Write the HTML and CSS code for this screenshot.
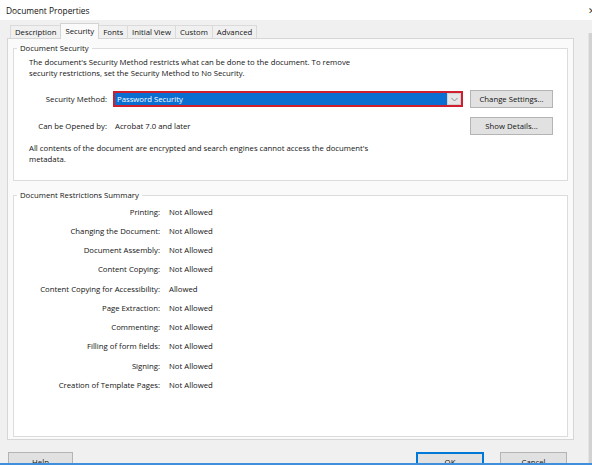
FILE: index.html
```html
<!DOCTYPE html>
<html lang="en">
<head>
<meta charset="utf-8">
<title>Document Properties</title>
<link rel="stylesheet" href="styles.css">
</head>
<body>
<div class="window">
  <header class="titlebar">
    <span class="title">Document Properties</span>
    <span class="close">&#x2715;</span>
  </header>
  <div class="content">
    <div class="dialog">
      <nav class="tabs">
        <span class="tab">Description</span>
        <span class="tab tab-active">Security</span>
        <span class="tab">Fonts</span>
        <span class="tab">Initial View</span>
        <span class="tab">Custom</span>
        <span class="tab">Advanced</span>
      </nav>
      <section class="panel">
        <fieldset class="group group-security">
          <legend>Document Security</legend>
          <p class="para para-intro">The document's Security Method restricts what can be done to the document. To remove security restrictions, set the Security Method to No Security.</p>
          <div class="method-grid">
            <span class="label">Security Method:</span>
            <div class="select">
              <span class="select-text">Password Security</span>
              <span class="select-arrow">
                <svg width="7" height="5" viewBox="0 0 7 5"><path d="M0.5 1 L3.5 4 L6.5 1" fill="none" stroke="#8a8a8a" stroke-width="1"/></svg>
              </span>
            </div>
            <button class="btn btn-side">Change Settings...</button>
            <span class="label">Can be Opened by:</span>
            <span class="value">Acrobat 7.0 and later</span>
            <button class="btn btn-side">Show Details...</button>
          </div>
          <p class="para para-note">All contents of the document are encrypted and search engines cannot access the document's metadata.</p>
        </fieldset>
        <fieldset class="group group-restrictions">
          <legend>Document Restrictions Summary</legend>
          <div class="restrictions">
            <span class="r-label">Printing:</span><span class="r-value">Not Allowed</span>
            <span class="r-label">Changing the Document:</span><span class="r-value">Not Allowed</span>
            <span class="r-label">Document Assembly:</span><span class="r-value">Not Allowed</span>
            <span class="r-label">Content Copying:</span><span class="r-value">Not Allowed</span>
            <span class="r-label">Content Copying for Accessibility:</span><span class="r-value">Allowed</span>
            <span class="r-label">Page Extraction:</span><span class="r-value">Not Allowed</span>
            <span class="r-label">Commenting:</span><span class="r-value">Not Allowed</span>
            <span class="r-label">Filling of form fields:</span><span class="r-value">Not Allowed</span>
            <span class="r-label">Signing:</span><span class="r-value">Not Allowed</span>
            <span class="r-label">Creation of Template Pages:</span><span class="r-value">Not Allowed</span>
          </div>
        </fieldset>
      </section>
      <footer class="actions">
        <button class="btn btn-help">Help</button>
        <span class="spacer"></span>
        <button class="btn btn-ok">OK</button>
        <button class="btn btn-cancel">Cancel</button>
      </footer>
    </div>
    <div class="edge"></div>
  </div>
  <div class="taskbar-line"></div>
</div>
</body>
</html>
```
FILE: styles.css
```css
* { box-sizing: border-box; }
html, body { margin: 0; padding: 0; }
body {
  width: 592px;
  height: 465px;
  overflow: hidden;
  background: #f0f0f0;
  font-family: "Open Sans", "Noto Sans", sans-serif;
  font-size: 7.75px;
  color: #141414;
}
.window { display: flex; flex-direction: column; height: 465px; }

.titlebar {
  height: 20px;
  background: #ffffff;
  display: flex;
  align-items: center;
  justify-content: space-between;
  padding-left: 6px;
  flex: none;
}
.title { font-size: 8.4px; color: #111; }
.close { font-size: 9px; color: #444; margin-right: -4px; }

.content { display: flex; height: 443px; flex: none; }
.dialog {
  width: 567px;
  margin-left: 7px;
  display: flex;
  flex-direction: column;
}
.edge {
  width: 4px;
  margin-left: 14px;
  margin-top: 13px;
  background: #d2d2d2;
  border-left: 1px solid #e4e4e4;
  flex: none;
}

.tabs {
  height: 18px;
  display: flex;
  align-items: flex-end;
  padding-left: 3px;
  flex: none;
  position: relative;
  z-index: 1;
}
.tab {
  height: 13px;
  line-height: 12px;
  padding: 0 4px;
  border: 1px solid #dadada;
  border-bottom: none;
  margin-right: -1px;
  background: #f0f0f0;
  white-space: nowrap;
}
.tab-active {
  height: 16px;
  line-height: 14px;
  margin-bottom: -1px;
  padding: 0 4px;
  background: #fafafa;
  border-color: #d4d4d4;
  position: relative;
  z-index: 2;
}

.panel {
  height: 402px;
  border: 1px solid #d6d6d6;
  background: #fafafa;
  padding: 4px 5px 2px 5px;
  display: flex;
  flex-direction: column;
  flex: none;
}

.group {
  margin: 0;
  border: 1px solid #dcdcdc;
  background: #ffffff;
  padding: 0 15px;
  min-width: 0;
}
.group legend {
  padding: 0 3px;
  margin-left: -12px;
  line-height: 11px;
  font-size: 7.75px;
}
.group-security { padding-bottom: 15px; flex: none; }
.group-restrictions { margin-top: 9px; flex: 1; }

.para { margin: 0; line-height: 11px; }
.para-intro { margin-top: 3px; width: 345px; }
.para-note { margin-top: 8px; width: 360px; }

.method-grid {
  margin-top: 11px;
  display: grid;
  grid-template-columns: 78px 350px 84px;
  grid-auto-rows: 18px;
  column-gap: 6px;
  row-gap: 9px;
  align-items: center;
}
.label { text-align: right; white-space: nowrap; }
.value { padding-left: 2px; white-space: nowrap; }

.select {
  height: 16px;
  border: 2px solid #cf1f2e;
  background: #0a6fd1;
  display: flex;
  align-items: center;
  justify-content: space-between;
  padding-left: 2px;
}
.select-text { color: #ffffff; white-space: nowrap; }
.select-arrow {
  width: 14px;
  height: 12px;
  background: #e6e6e6;
  border: 1px solid #d0d0d0;
  display: flex;
  align-items: center;
  justify-content: center;
}

.btn {
  font-family: inherit;
  font-size: 7.75px;
  color: #141414;
  background: #e1e1e1;
  border: 1px solid #b4b4b4;
  padding: 0;
  height: 18px;
  white-space: nowrap;
}
.btn-side { margin-left: 1px; }

.restrictions {
  padding-top: 1px;
  display: grid;
  grid-template-columns: 131px auto;
  grid-auto-rows: 19.25px;
  column-gap: 9px;
  align-items: center;
}
.r-label { text-align: right; white-space: nowrap; }
.r-value { white-space: nowrap; }

.actions {
  height: 23px;
  display: flex;
  align-items: flex-start;
  padding-top: 12px;
  padding-right: 7px;
  overflow: hidden;
  flex: none;
}
.actions .btn { height: 20px; }
.btn-help { width: 65px; margin-left: 1px; }
.spacer { flex: 1; }
.btn-ok { width: 68px; border: 1px solid #0078d7; box-shadow: inset 0 0 0 1px #0078d7; }
.btn-cancel { width: 67px; margin-left: 16px; }

.taskbar-line { height: 2px; background: #3f8fdc; flex: none; }
```
